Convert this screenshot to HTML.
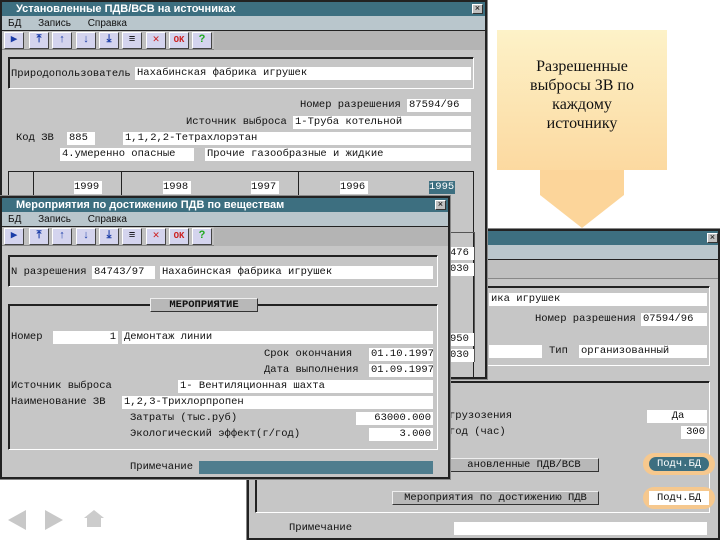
<!DOCTYPE html>
<html><head><meta charset="utf-8"><style>
*{margin:0;padding:0;box-sizing:border-box}
body{width:720px;height:540px;background:#fff;position:relative;overflow:hidden;font-family:"Liberation Mono","DejaVu Sans Mono",monospace;font-size:10.5px;color:#111}
.a{position:absolute}
.win{position:absolute;background:#c6c6c6;border:2px solid #222;outline:1px solid #888;overflow:hidden}
.tb{position:absolute;left:0;right:0;top:0;height:14px;background:#3d6f80;color:#fff;font-family:"Liberation Sans",sans-serif;font-weight:bold;font-size:11px;line-height:14px;padding-left:14px}
.mn{position:absolute;left:0;right:0;height:15px;background:#b9c6cc;font-family:"Liberation Sans",sans-serif;font-size:10px;line-height:15px;padding-left:6px;word-spacing:14px;border-bottom:1px solid #222}
.tl{position:absolute;left:0;right:0;height:19px;background:#c0c0c0;border-bottom:1px solid #888}
.btn{position:absolute;top:1px;width:20px;height:17px;background:#d4d4ee;border:1px solid #fff;border-right-color:#444;border-bottom-color:#444;color:#1a3ca8;font-size:11px;line-height:14px;text-align:center;font-weight:bold}
.cl{position:absolute;top:2px;width:11px;height:10px;background:#c0c0c0;border:1px solid #fff;border-right-color:#333;border-bottom-color:#333;color:#000;font-size:9px;line-height:8px;text-align:center}
.f{position:absolute;height:13px;background:#fff;line-height:13px;padding-left:2px;white-space:nowrap;overflow:hidden}
.r{text-align:right;padding-right:2px}
.l{position:absolute;line-height:13px;white-space:nowrap}
.g{position:absolute;border:1px solid #222;border-right-color:#fff;border-bottom-color:#fff;box-shadow:1px 1px 0 #222 inset}
.pb{position:absolute;height:14px;background:#b8b8b8;border:1px solid #eee;border-right-color:#333;border-bottom-color:#333;text-align:center;line-height:12px}
</style></head><body>

<div class="a" style="left:497px;top:30px;width:170px;height:140px;background:linear-gradient(#fdf2c8,#fcd9a0)"></div>
<div class="a" style="left:540px;top:170px;width:84px;height:25px;background:#fcd59a"></div>
<div class="a" style="left:540px;top:195px;width:0;height:0;border-left:42px solid transparent;border-right:42px solid transparent;border-top:33px solid #fcd59a"></div>
<div class="a" style="left:497px;top:57px;width:170px;text-align:center;font-family:'Liberation Serif',serif;font-size:16px;line-height:19px;color:#111">Разрешенные<br>выбросы ЗВ по<br>каждому<br>источнику</div>

<div class="a" style="left:8px;top:510px;width:0;height:0;border-top:10px solid transparent;border-bottom:10px solid transparent;border-right:18px solid #c8c8c8"></div>
<div class="a" style="left:45px;top:510px;width:0;height:0;border-top:10px solid transparent;border-bottom:10px solid transparent;border-left:18px solid #c8c8c8"></div>
<div class="a" style="left:84px;top:510px;width:0;height:0;border-left:10px solid transparent;border-right:10px solid transparent;border-bottom:8px solid #ccc"></div>
<div class="a" style="left:87px;top:518px;width:14px;height:9px;background:#ccc"></div>

<div class="win" style="left:247px;top:229px;width:473px;height:311px">
 <div class="tb"></div><div class="cl" style="left:458px">×</div>
 <div class="mn" style="top:14px"></div>
 <div class="tl" style="top:29px"></div>
 <div class="g" style="left:6px;top:55px;width:455px;height:80px"></div>
 <div class="f" style="left:240px;top:62px;width:218px">ика игрушек</div>
 <div class="l" style="left:286px;top:82px">Номер разрешения</div>
 <div class="f" style="left:392px;top:82px;width:66px">07594/96</div>
 <div class="f" style="left:240px;top:114px;width:53px"></div>
 <div class="l" style="left:300px;top:114px">Тип</div>
 <div class="f" style="left:330px;top:114px;width:128px">организованный</div>
 <div class="g" style="left:6px;top:150px;width:455px;height:132px"></div>
 <div class="l" style="left:200px;top:179px">грузозения</div>
 <div class="f" style="left:398px;top:179px;width:60px;text-align:center">Да</div>
 <div class="l" style="left:200px;top:195px">год (час)</div>
 <div class="f r" style="left:432px;top:195px;width:26px">300</div>
 <div class="pb" style="left:200px;top:227px;width:150px">ановленные ПДВ/ВСВ</div>
 <div class="a" style="left:394px;top:222px;width:72px;height:22px;border-radius:11px;background:#f6c88e"></div>
 <div class="a" style="left:400px;top:226px;width:60px;height:14px;border-radius:7px;background:#3d6f80;color:#fff;text-align:center;line-height:14px">Подч.БД</div>
 <div class="pb" style="left:143px;top:260px;width:207px">Мероприятия по достижению ПДВ</div>
 <div class="a" style="left:394px;top:256px;width:72px;height:22px;border-radius:11px;background:#f6c88e"></div>
 <div class="a" style="left:400px;top:260px;width:60px;height:14px;background:#fff;text-align:center;line-height:14px">Подч.БД</div>
 <div class="l" style="left:40px;top:291px">Примечание</div>
 <div class="f" style="left:205px;top:291px;width:253px"></div>
</div>

<div class="win" style="left:0;top:0;width:487px;height:379px">
 <div class="tb">Установленные ПДВ/ВСВ на источниках</div><div class="cl" style="left:470px">×</div>
 <div class="mn" style="top:14px">БД Запись Справка</div>
 <div class="tl" style="top:29px">
  <div class="btn" style="left:2px">▶</div><div class="btn" style="left:27px">⤒</div><div class="btn" style="left:50px">↑</div><div class="btn" style="left:74px">↓</div><div class="btn" style="left:97px">⤓</div><div class="btn" style="left:120px;color:#000">≡</div><div class="btn" style="left:144px;color:#c22">✕</div><div class="btn" style="left:167px;color:#c22;font-size:9px">OK</div><div class="btn" style="left:190px;color:#2a2">?</div>
  <div class="a" style="left:212px;top:0;right:0;height:19px;background:#b4b4b4"></div>
 </div>
 <div class="g" style="left:6px;top:55px;width:466px;height:32px"></div>
 <div class="l" style="left:9px;top:66px">Природопользователь</div>
 <div class="f" style="left:133px;top:65px;width:336px">Нахабинская фабрика игрушек</div>
 <div class="l" style="left:298px;top:97px">Номер разрешения</div>
 <div class="f" style="left:405px;top:97px;width:64px">87594/96</div>
 <div class="l" style="left:184px;top:114px">Источник выброса</div>
 <div class="f" style="left:291px;top:114px;width:178px">1-Труба котельной</div>
 <div class="l" style="left:14px;top:130px">Код ЗВ</div>
 <div class="f" style="left:65px;top:130px;width:28px">885</div>
 <div class="f" style="left:121px;top:130px;width:348px">1,1,2,2-Тетрахлорэтан</div>
 <div class="f" style="left:58px;top:146px;width:134px">4.умеренно опасные</div>
 <div class="f" style="left:203px;top:146px;width:266px">Прочие газообразные и жидкие</div>
 <div class="a" style="left:6px;top:169px;width:466px;height:210px;border:1px solid #222"></div>
 <div class="a" style="left:31px;top:169px;width:1px;height:40px;background:#222"></div>
 <div class="a" style="left:119px;top:169px;width:1px;height:40px;background:#222"></div>
 <div class="a" style="left:296px;top:169px;width:1px;height:40px;background:#222"></div>
 <div class="f" style="left:72px;top:179px;width:28px;padding:0">1999</div>
 <div class="f" style="left:161px;top:179px;width:28px;padding:0">1998</div>
 <div class="f" style="left:249px;top:179px;width:28px;padding:0">1997</div>
 <div class="f" style="left:338px;top:179px;width:28px;padding:0">1996</div>
 <div class="f" style="left:427px;top:179px;width:26px;padding:0;background:#3d6f80;color:#fff">1995</div>
 <div class="a" style="left:447px;top:230px;width:26px;height:130px;border:1px solid #555"></div>
 <div class="f" style="left:448px;top:245px;width:24px;padding:0">476</div>
 <div class="f" style="left:448px;top:261px;width:24px;padding:0">030</div>
 <div class="f" style="left:448px;top:331px;width:24px;padding:0">950</div>
 <div class="f" style="left:448px;top:347px;width:24px;padding:0">030</div>
</div>

<div class="win" style="left:0;top:196px;width:450px;height:283px">
 <div class="tb">Мероприятия по достижению ПДВ по веществам</div><div class="cl" style="left:433px">×</div>
 <div class="mn" style="top:14px">БД Запись Справка</div>
 <div class="tl" style="top:29px">
  <div class="btn" style="left:2px">▶</div><div class="btn" style="left:27px">⤒</div><div class="btn" style="left:50px">↑</div><div class="btn" style="left:74px">↓</div><div class="btn" style="left:97px">⤓</div><div class="btn" style="left:120px;color:#000">≡</div><div class="btn" style="left:144px;color:#c22">✕</div><div class="btn" style="left:167px;color:#c22;font-size:9px">OK</div><div class="btn" style="left:190px;color:#2a2">?</div>
  <div class="a" style="left:212px;top:0;right:0;height:19px;background:#b4b4b4"></div>
 </div>
 <div class="g" style="left:6px;top:57px;width:430px;height:32px"></div>
 <div class="l" style="left:9px;top:68px">N разрешения</div>
 <div class="f" style="left:90px;top:68px;width:63px">84743/97</div>
 <div class="f" style="left:158px;top:68px;width:273px">Нахабинская фабрика игрушек</div>
 <div class="g" style="left:6px;top:106px;width:430px;height:146px"></div>
 <div class="pb" style="left:148px;top:100px;width:108px;font-weight:bold">МЕРОПРИЯТИЕ</div>
 <div class="l" style="left:9px;top:133px">Номер</div>
 <div class="f r" style="left:51px;top:133px;width:65px">1</div>
 <div class="f" style="left:120px;top:133px;width:311px">Демонтаж линии</div>
 <div class="l" style="left:262px;top:150px">Срок окончания</div>
 <div class="f" style="left:367px;top:150px;width:64px">01.10.1997</div>
 <div class="l" style="left:262px;top:166px">Дата выполнения</div>
 <div class="f" style="left:367px;top:166px;width:64px">01.09.1997</div>
 <div class="l" style="left:9px;top:182px">Источник выброса</div>
 <div class="f" style="left:176px;top:182px;width:255px">1-   Вентиляционная шахта</div>
 <div class="l" style="left:9px;top:198px">Наименование ЗВ</div>
 <div class="f" style="left:120px;top:198px;width:311px">1,2,3-Трихлорпропен</div>
 <div class="l" style="left:128px;top:214px">Затраты (тыс.руб)</div>
 <div class="f r" style="left:354px;top:214px;width:77px">63000.000</div>
 <div class="l" style="left:128px;top:230px">Экологический эффект(г/год)</div>
 <div class="f r" style="left:367px;top:230px;width:64px">3.000</div>
 <div class="l" style="left:128px;top:263px">Примечание</div>
 <div class="f" style="left:197px;top:263px;width:234px;background:#4f7d8e"></div>
</div>

</body></html>
